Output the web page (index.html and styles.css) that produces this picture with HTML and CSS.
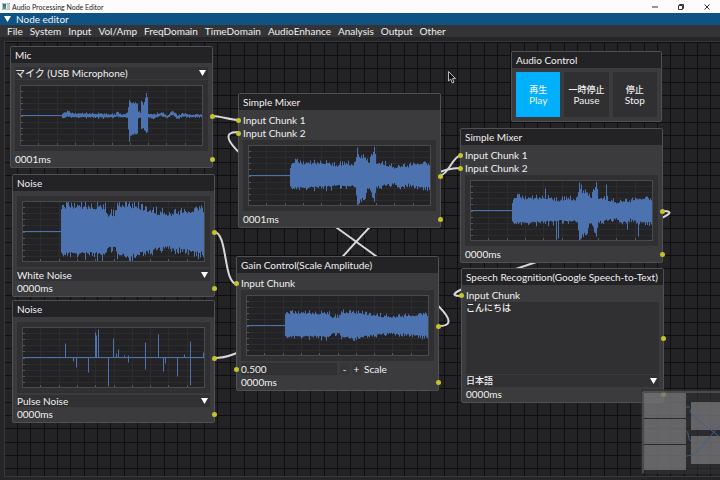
FILE: index.html
```html
<!DOCTYPE html>
<html lang="en">
  <head>
    <meta charset="UTF-8" />
    <meta name="viewport" content="width=device-width, initial-scale=1.0" />
    <title>Audio Processing Node Editor</title>
    <link rel="stylesheet" href="styles.css">
  </head>
  <body>
    <header class="titlebar">
      <svg class="app-icon" viewBox="0 0 16 14">
        <rect x="0.5" y="0.5" width="15" height="13" fill="#e8eef2" stroke="#8a9298" />
        <rect x="2" y="2" width="6" height="10" fill="#2f6f9a" />
        <rect x="2" y="7" width="6" height="5" fill="#4b9a72" />
        <rect x="10" y="2" width="4" height="10" fill="#c3ccd2" />
      </svg>
      <h1>Audio Processing Node Editor</h1>
      <div class="win-buttons">
        <button type="button" aria-label="Minimize">
          <svg viewBox="0 0 6 6"><path d="M0 3H6" /></svg>
        </button>
        <button type="button" aria-label="Restore">
          <svg viewBox="0 0 6 6"><path d="M0.5 1.5H4.5V5.5H0.5ZM1.5 1.5V0.5H5.5V4.5H4.5" /></svg>
        </button>
        <button type="button" aria-label="Close">
          <svg viewBox="0 0 6 6"><path d="M0.5 0.5L5.5 5.5M5.5 0.5L0.5 5.5" /></svg>
        </button>
      </div>
    </header>

    <div class="panel-title"><span class="arrow"></span>Node editor</div>

    <nav class="menu">
      <button type="button">File</button>
      <button type="button">System</button>
      <button type="button">Input</button>
      <button type="button">Vol/Amp</button>
      <button type="button">FreqDomain</button>
      <button type="button">TimeDomain</button>
      <button type="button">AudioEnhance</button>
      <button type="button">Analysis</button>
      <button type="button">Output</button>
      <button type="button">Other</button>
    </nav>

    <main class="canvas">
      <!-- links between the nodes -->
      <svg class="wires">
        <path d="M208 74C214 74 227 78 233 78" />
        <path d="M209 190C223 190 218 242 232 242" />
        <path d="M209 316C287 316 377 126 455 126" />
        <path d="M434 284C504 284 163 90 233 90" />
        <path d="M436 133C443 133 448 114 455 114" />
        <path d="M658 169C713 169 401 254 456 254" />
      </svg>

      <section class="node mic">
        <h2>Mic</h2>
        <div class="body">
          <label class="combo"><select aria-label="Microphone"><option>マイク (USB Microphone)</option></select></label>
          <div class="plot out"><svg data-wave="mic"></svg></div>
          <p class="row out">0001ms</p>
        </div>
      </section>

      <section class="node noise1">
        <h2>Noise</h2>
        <div class="body">
          <div class="plot out"><svg data-wave="white"></svg></div>
          <label class="combo"><select aria-label="Noise type"><option>White Noise</option></select></label>
          <p class="row out">0000ms</p>
        </div>
      </section>

      <section class="node noise2">
        <h2>Noise</h2>
        <div class="body">
          <div class="plot out"><svg data-wave="pulse"></svg></div>
          <label class="combo"><select aria-label="Noise type"><option>Pulse Noise</option></select></label>
          <p class="row out">0000ms</p>
        </div>
      </section>

      <section class="node mixer1">
        <h2>Simple Mixer</h2>
        <div class="body">
          <p class="row in">Input Chunk 1</p>
          <p class="row in">Input Chunk 2</p>
          <div class="plot out"><svg data-wave="mixer"></svg></div>
          <p class="row out">0001ms</p>
        </div>
      </section>

      <section class="node gain">
        <h2>Gain Control(Scale Amplitude)</h2>
        <div class="body">
          <p class="row in">Input Chunk</p>
          <div class="plot out"><svg data-wave="gain"></svg></div>
          <div class="row in stepper">
            <input type="text" id="scale" value="0.500" />
            <button type="button" aria-label="Decrease">-</button>
            <button type="button" aria-label="Increase">+</button>
            <label for="scale">Scale</label>
          </div>
          <p class="row out">0000ms</p>
        </div>
      </section>

      <section class="node audio">
        <h2>Audio Control</h2>
        <div class="body transport">
          <button type="button" class="active"><span class="ja">再生</span>Play</button>
          <button type="button"><span class="ja">一時停止</span>Pause</button>
          <button type="button"><span class="ja">停止</span>Stop</button>
        </div>
      </section>

      <section class="node mixer2">
        <h2>Simple Mixer</h2>
        <div class="body">
          <p class="row in">Input Chunk 1</p>
          <p class="row in">Input Chunk 2</p>
          <div class="plot out"><svg data-wave="mixer2"></svg></div>
          <p class="row out">0000ms</p>
        </div>
      </section>

      <section class="node speech">
        <h2>Speech Recognition(Google Speech-to-Text)</h2>
        <div class="body">
          <p class="row in">Input Chunk</p>
          <div class="result out"><textarea class="ja" aria-label="Recognized text">こんにちは</textarea></div>
          <label class="combo"><select class="ja" aria-label="Language"><option>日本語</option></select></label>
          <p class="row out">0000ms</p>
        </div>
      </section>

      <svg class="cursor" viewBox="0 0 8 13">
        <path d="M0.5 0.5V10L2.7 8L4.2 12L6 11.2L4.5 7.6H7.5Z" />
      </svg>

      <div class="minimap">
        <svg viewBox="0 0 79 85">
          <path class="edge" d="M2 84V3H79" />
          <g class="boxes">
            <rect x="3" y="4" width="42" height="25" />
            <rect x="3" y="30" width="42" height="25" />
            <rect x="3" y="56" width="42" height="25" />
            <rect x="50" y="13" width="30" height="28" />
            <rect x="50" y="47" width="30" height="28" />
          </g>
          <path class="links" d="M45 18H49M50 21C44 22 66 38 79 48M45 42C48 42 47 52 50 52M45 67C58 67 66 48 79 37" />
        </svg>
      </div>
    </main>

    <script src="waves.js"></script>
  </body>
</html>
```

FILE: styles.css
```css
* {
  margin: 0;
  padding: 0;
  box-sizing: border-box;
}
body {
  display: flex;
  flex-direction: column;
  height: 100vh;
  overflow: hidden;
  background-color: #252527;
  color: #f0f0f0;
  font: 10px/12px Lato, "Noto Sans CJK JP", sans-serif;
  font-variant-ligatures: none;
}
button,
input,
select,
textarea {
  border: none;
  background: none;
  color: inherit;
  font: inherit;
}

/* window title */
.titlebar {
  display: flex;
  align-items: center;
  gap: 2px;
  height: 13px;
  padding-left: 2px;
  background-color: #fdfbfe;
  color: #222;
}
.titlebar h1 {
  flex: 1;
  font: 7px/12px Lato, sans-serif;
}
.app-icon {
  width: 8px;
  height: 7px;
}
.win-buttons {
  display: flex;
}
.win-buttons button {
  display: flex;
  align-items: center;
  justify-content: center;
  width: 26px;
  height: 12px;
}
.win-buttons svg {
  width: 6px;
  height: 6px;
  fill: none;
  stroke: #333;
}

.panel-title {
  display: flex;
  align-items: center;
  gap: 5px;
  height: 12px;
  padding-left: 4px;
  background-color: #0f5384;
}
.arrow,
.combo::after {
  width: 7px;
  height: 6px;
  background-color: #fff;
  clip-path: polygon(0 0, 100% 0, 50% 100%);
}

.menu {
  display: flex;
  gap: 7px;
  height: 12px;
  padding-left: 7px;
  background-color: #343436;
}

/* node canvas */
.canvas {
  position: relative;
  flex: 1;
  margin: 4px 0 3px 4px;
  border: 1px solid #39393b;
  border-right: none;
  overflow: hidden;
  background-color: #232225;
  background-image:
    linear-gradient(90deg, #0e0d10 1px, transparent 1px, transparent 13px, #0e0d10 13px, #0e0d10 14px, transparent 14px, transparent 27px, #0e0d10 27px, #0e0d10 28px, transparent 28px),
    linear-gradient(#0e0d10 1px, transparent 1px, transparent 13px, #0e0d10 13px, #0e0d10 14px, transparent 14px, transparent 27px, #0e0d10 27px, #0e0d10 28px, transparent 28px);
  background-size: 40px 40px;
  background-position: 12px 13px;
}
.wires {
  position: absolute;
  width: 100%;
  height: 100%;
  fill: none;
  stroke: #d8d8d8;
  stroke-width: 2;
}
.node {
  position: absolute;
  width: 203px;
  border: 1px solid #505052;
  border-radius: 2px;
  background-color: #3b3b3d;
}
.node h2 {
  padding: 2px 4px;
  background-color: #232225;
  font-size: 10px;
  font-weight: normal;
  white-space: nowrap;
}
.mic { left: 5px; top: 4px; }
.noise1 { left: 7px; top: 132px; }
.noise2 { left: 7px; top: 258px; }
.mixer1 { left: 233px; top: 51px; }
.gain { left: 231px; top: 214px; }
.audio { left: 506px; top: 9px; width: 151px; }
.mixer2 { left: 455px; top: 86px; }
.speech { left: 456px; top: 226px; }

.body {
  display: flex;
  flex-direction: column;
  gap: 1px;
  padding: 4px 4px 2px;
}
.row {
  height: 12px;
}

/* pins on the node edges */
.in,
.out {
  position: relative;
}
.in::before,
.out::before {
  content: "";
  position: absolute;
  top: 50%;
  width: 5px;
  height: 5px;
  margin-top: -2px;
  border-radius: 50%;
  background-color: #c4c42c;
}
.in::before {
  left: -7px;
}
.out::before {
  right: -7px;
}

.combo {
  display: flex;
  align-items: center;
  height: 12px;
  padding-right: 2px;
  background-color: #313133;
}
.combo select {
  flex: 1;
  height: 12px;
  appearance: none;
}
.combo::after {
  content: "";
}

.plot {
  height: 71px;
  margin-bottom: 1px;
  padding: 5px;
  background-color: #303032;
}
.plot:first-child {
  margin-top: 1px;
}
.plot svg {
  display: block;
  width: 100%;
  height: 61px;
  outline: 1px solid #4a4a4c;
  outline-offset: -1px;
  background-color: #232325;
}
.plot .grid {
  stroke: #2c2c2e;
}
.plot .ticks {
  stroke: #58585a;
}
.plot .wave {
  stroke: #4c72b0;
}

.stepper {
  display: flex;
  gap: 3px;
}
.stepper input {
  width: 96px;
  background-color: #313133;
}
.stepper button {
  width: 9px;
  background-color: #363638;
}

/* japanese glyphs are set a bit smaller than the latin ones */
.body .ja {
  font-family: "Noto Sans CJK JP", sans-serif;
  font-size: 9px;
  font-weight: 500;
}

.transport {
  flex-direction: row;
  gap: 4px;
  padding: 4px;
}
.transport button {
  flex: 1;
  height: 45px;
  background-color: #303032;
  line-height: 10px;
  white-space: nowrap;
}
.transport .ja {
  display: block;
}
.transport .active {
  background-color: #00b0fc;
}

.result {
  height: 72px;
}
.result textarea {
  display: block;
  width: 100%;
  height: 100%;
  background-color: #303032;
  resize: none;
}

.cursor {
  position: absolute;
  left: 443px;
  top: 29px;
  width: 8px;
  height: 13px;
  fill: #111;
  stroke: #bbb;
}

.minimap {
  position: absolute;
  right: 0;
  bottom: 2px;
  width: 79px;
  height: 85px;
  background-color: rgba(50, 50, 52, 0.6);
}
.minimap svg {
  display: block;
}
.minimap .edge {
  fill: none;
  stroke: #6a6a6c;
}
.minimap .boxes {
  fill: rgba(150, 150, 152, 0.55);
}
.minimap .links {
  fill: none;
  stroke: #40608c;
}
```

FILE: waves.js
```js
// plot size in samples / units, the signal runs from -30 to 30
var W = 183;
var H = 61;
var MID = 30.5;

var white = [[39, 25, -23], [60, 25, -23], [83, 24, -23], [85, 17, -17], [93, 18, -18], [95, 27, -25], [115, 25, -24], [125, 22, -21], [135, 19, -18], [150, 18, -17], [165, 20, -20], [178, 24, -23], [183, 20, -20]];
var mixed = [[42, 9, -12], [46, 14, -13], [55, 12, -13], [75, 13, -12], [88, 10, -10], [95, 12, -12], [107, 11, -11], [109, 27, -29], [110, 19, -24], [117, 18, -23], [119, 14, -13], [121, 14, -14], [126, 27, -25], [128, 13, -12], [138, 11, -10], [146, 8, -9], [150, 10, -13], [158, 9, -9], [168, 12, -12], [176, 13, -13], [183, 10, -12]];

// env: [x, high, low], spikes: [x, high, low]
var waves = {
  mic: {
    jitter: 1,
    env: [[42, 2, -3], [47, 4, -1], [52, 2, -2], [75, 2, -2], [95, 1, -2], [97, 4, -1], [100, 1, -2], [107, 2, -2], [109, 15, -26], [110, 13, -19], [117, 12, -18], [118, 4, -3], [120, 3, -2], [121, 15, -14], [123, 10, -13], [126, 22, -17], [127, 18, -17], [128, 2, -2], [134, 1, -3], [141, 3, 0], [147, 0, -3], [152, 5, 1], [157, 0, -3], [163, 2, -1], [170, 1, -2], [183, 1, -1]]
  },
  white: { jitter: 5, env: white },
  gain: { jitter: 5, scale: 0.5, env: white },
  mixer: { jitter: 3, env: mixed },
  mixer2: {
    jitter: 3,
    env: mixed,
    spikes: [[75, 22, 0], [86, 0, -30], [88, 0, -28], [111, 26, 0], [136, 26, 0], [157, 0, -19], [168, 0, -26]]
  },
  pulse: {
    jitter: 0,
    env: [],
    spikes: [[43, 14, 0], [51, 0, -4], [54, 0, -10], [66, 0, -15], [73, 25, 0], [74, 22, 0], [76, 28, 0], [86, 0, -29], [91, 19, 0], [94, 4, 0], [96, 8, 0], [102, 2, 0], [106, 2, -5], [123, 15, -12], [136, 23, 0], [141, 0, -14], [143, 0, -6], [155, 0, -19], [162, 3, 0], [168, 16, -28], [181, 5, 0]]
  }
};

function drawWave(svg) {
  var wave = waves[svg.dataset.wave];
  var scale = wave.scale || 1;
  var seed = 7;
  function rand() {
    seed = (seed * 16807) % 2147483647;
    return seed / 2147483647;
  }
  function bar(x, high, low) {
    var top = Math.max(1, MID - high * scale);
    var bottom = Math.min(H - 1, MID - low * scale);
    return "M" + (x + 0.5) + " " + top + "V" + bottom;
  }

  var grid = "";
  var ticks = "";
  for (var i = 1; i < 10; i++) {
    var gx = Math.round((W * i) / 10) + 0.5;
    var gy = Math.round((H * i) / 10) + 0.5;
    grid += "M" + gx + " 0V" + H + "M0 " + gy + "H" + W;
    ticks += "M" + gx + " " + H + "v-3M0 " + gy + "h3";
  }

  var d = "M0 " + MID + "H" + (wave.env.length ? wave.env[0][0] : W);
  for (var k = 0; k < wave.env.length - 1; k++) {
    var a = wave.env[k];
    var b = wave.env[k + 1];
    for (var x = a[0]; x < b[0]; x++) {
      var t = (x - a[0]) / (b[0] - a[0]);
      var up = (rand() * rand() * 2 - 0.5) * wave.jitter;
      var down = (rand() * rand() * 2 - 0.5) * wave.jitter;
      d += bar(x, a[1] + (b[1] - a[1]) * t + up, a[2] + (b[2] - a[2]) * t - down);
    }
  }
  (wave.spikes || []).forEach(function (s) {
    d += bar(s[0], s[1], s[2]);
  });

  svg.setAttribute("viewBox", "0 0 " + W + " " + H);
  svg.setAttribute("preserveAspectRatio", "none");
  svg.innerHTML =
    '<path class="grid" d="' + grid + '"/>' +
    '<path class="ticks" d="' + ticks + '"/>' +
    '<path class="wave" d="' + d + '"/>';
}

document.querySelectorAll("svg[data-wave]").forEach(drawWave);
```
